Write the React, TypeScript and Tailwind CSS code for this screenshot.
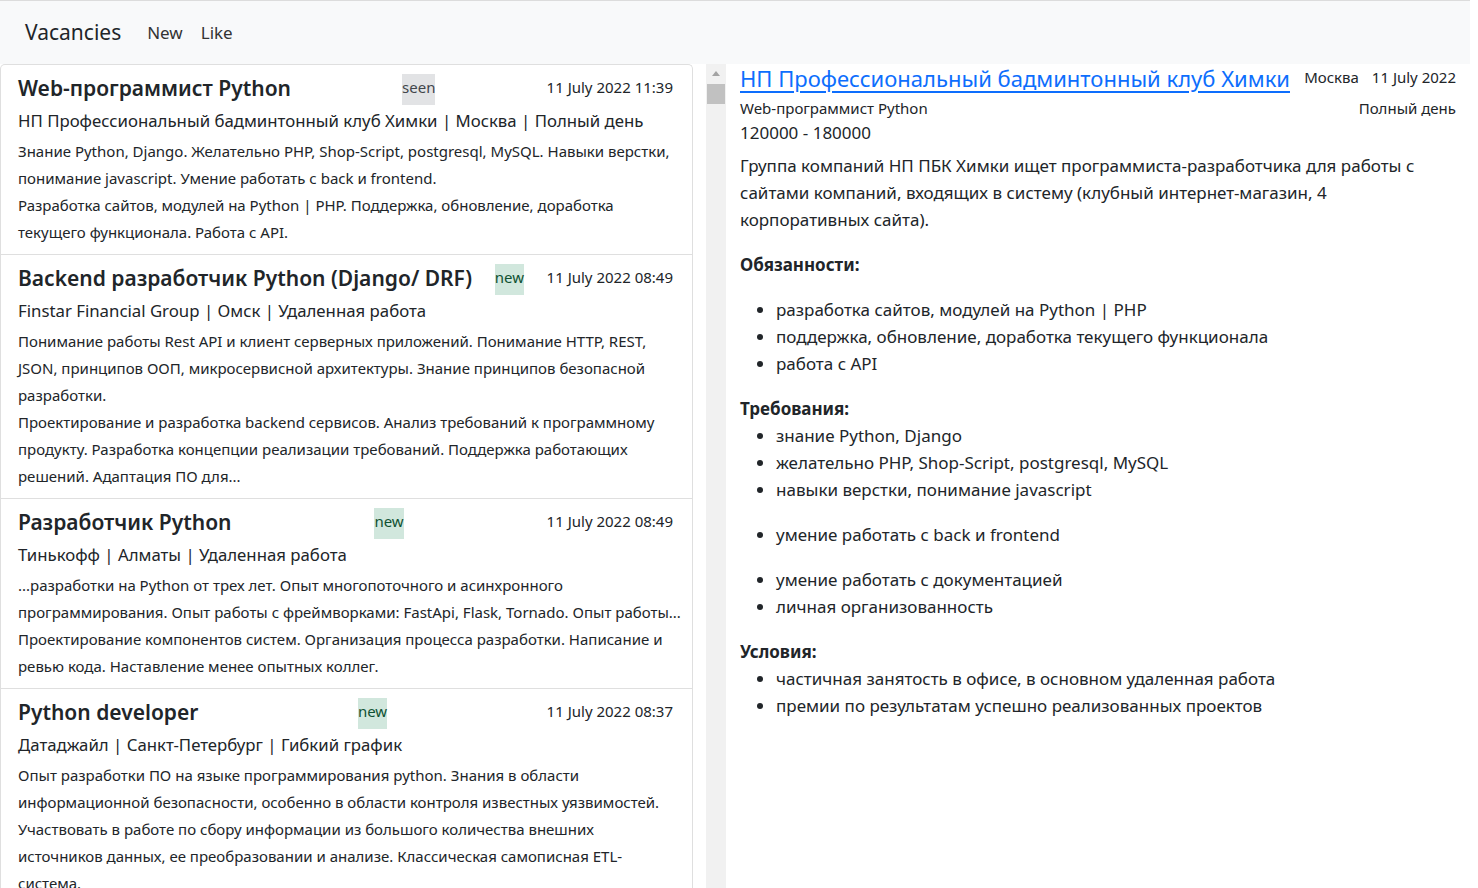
import React from "react";

type Vacancy = {
  id: number;
  title: string;
  badge: "seen" | "new";
  date: string;
  sub: string;
  lines: string[];
};

const vacancies: Vacancy[] = [
  {
    id: 1,
    title: "Web-программист Python",
    badge: "seen",
    date: "11 July 2022 11:39",
    sub: "НП Профессиональный бадминтонный клуб Химки | Москва | Полный день",
    lines: [
      "Знание Python, Django. Желательно PHP, Shop-Script, postgresql, MySQL. Навыки верстки,",
      "понимание javascript. Умение работать с back и frontend.",
      "Разработка сайтов, модулей на Python | PHP. Поддержка, обновление, доработка",
      "текущего функционала. Работа с API.",
    ],
  },
  {
    id: 2,
    title: "Backend разработчик Python (Django/ DRF)",
    badge: "new",
    date: "11 July 2022 08:49",
    sub: "Finstar Financial Group | Омск | Удаленная работа",
    lines: [
      "Понимание работы Rest API и клиент серверных приложений. Понимание HTTP, REST,",
      "JSON, принципов ООП, микросервисной архитектуры. Знание принципов безопасной",
      "разработки.",
      "Проектирование и разработка backend сервисов. Анализ требований к программному",
      "продукту. Разработка концепции реализации требований. Поддержка работающих",
      "решений. Адаптация ПО для...",
    ],
  },
  {
    id: 3,
    title: "Разработчик Python",
    badge: "new",
    date: "11 July 2022 08:49",
    sub: "Тинькофф | Алматы | Удаленная работа",
    lines: [
      "...разработки на Python от трех лет. Опыт многопоточного и асинхронного",
      "программирования. Опыт работы с фреймворками: FastApi, Flask, Tornado. Опыт работы...",
      "Проектирование компонентов систем. Организация процесса разработки. Написание и",
      "ревью кода. Наставление менее опытных коллег.",
    ],
  },
  {
    id: 4,
    title: "Python developer",
    badge: "new",
    date: "11 July 2022 08:37",
    sub: "Датаджайл | Санкт-Петербург | Гибкий график",
    lines: [
      "Опыт разработки ПО на языке программирования python. Знания в области",
      "информационной безопасности, особенно в области контроля известных уязвимостей.",
      "Участвовать в работе по сбору информации из большого количества внешних",
      "источников данных, ее преобразовании и анализе. Классическая самописная ETL-",
      "система.",
    ],
  },
];

const font = { fontFamily: '"Noto Sans", "Open Sans", sans-serif' };

const VacancyItem = ({ v }: { v: Vacancy }) => (
  <div className="border-b border-[#dfdfdf] pt-2 pr-[19px] pb-2 pl-[17px]">
    <div className="flex h-[30px] items-start justify-between">
      <div className="text-[21px] leading-[30px] font-semibold text-[#212529] whitespace-nowrap">{v.title}</div>
      <span
        className={
          v.badge === "seen"
            ? "mt-[1px] h-[31px] bg-[#e2e3e5] px-0 text-[15px] leading-[26px] text-[#41464b]"
            : "mt-[1px] h-[31px] bg-[#d1e7dd] px-0 text-[15px] leading-[26px] text-[#0f5132]"
        }
      >
        {v.badge}
      </span>
      <div className="text-[15px] leading-[28px] text-[#212529] whitespace-nowrap">{v.date}</div>
    </div>
    <div className="mt-1 text-[16.8px] leading-[27px] text-[#212529] whitespace-nowrap">{v.sub}</div>
    <div className="mt-1 text-[15px] leading-[27px] text-[#212529]">
      {v.lines.map((l, i) => (
        <div key={i} className="whitespace-nowrap">
          {l}
        </div>
      ))}
    </div>
  </div>
);

const Bullets = ({ items }: { items: string[] }) => (
  <ul className="list-disc pl-9 text-[17px] leading-[27px]">
    {items.map((t) => (
      <li key={t}>{t}</li>
    ))}
  </ul>
);

export default function App() {
  return (
    <div className="h-[888px] overflow-hidden bg-white text-[#212529]" style={font}>
      <nav className="flex h-[64px] w-[1470px] items-center border-t border-[#dcdcdc] bg-[#f8f9fa] pl-[25px]">
        <span className="text-[21px] text-[#212529]">Vacancies</span>
        <span className="ml-[26px] text-[17px] text-[#333]">New</span>
        <span className="ml-[18px] text-[17px] text-[#333]">Like</span>
      </nav>
      <div className="flex">
        {/* list column */}
        <div className="flex h-[824px] w-[726px] overflow-hidden">
          <div className="w-[693px] shrink-0 rounded-t-[5px] border-t border-r border-l border-[#dfdfdf]">
            {vacancies.map((v) => (
              <VacancyItem key={v.id} v={v} />
            ))}
          </div>
          <div className="ml-[13px] flex w-[20px] shrink-0 flex-col items-center bg-[#f1f1f1]">
            <div className="mt-[7px] h-0 w-0 border-r-[4px] border-b-[5px] border-l-[4px] border-r-transparent border-b-[#a3a3a3] border-l-transparent" />
            <div className="mt-[8px] h-[20px] w-[18px] bg-[#c1c1c1]" />
          </div>
        </div>
        {/* detail column */}
        <div className="ml-[14px] w-[716px]">
          <div className="flex items-start">
            <a href="#" className="flex-1 text-[22px] leading-[29px] text-[#0d6efd] underline underline-offset-[4px] whitespace-nowrap">
              НП Профессиональный бадминтонный клуб Химки
            </a>
            <span className="mt-[2px] text-[15px] leading-[22px]">Москва</span>
            <span className="mt-[2px] ml-[13px] text-[15px] leading-[22px]">11 July 2022</span>
          </div>
          <div className="mt-1 flex justify-between text-[15px] leading-[22px]">
            <span>Web-программист Python</span>
            <span>Полный день</span>
          </div>
          <div className="text-[17px] leading-[27px]">120000 - 180000</div>
          <div className="mt-[6px] text-[17px] leading-[27px]">
            Группа компаний НП ПБК Химки ищет программиста-разработчика для работы с<br />
            сайтами компаний, входящих в систему (клубный интернет-магазин, 4<br />
            корпоративных сайта).
          </div>
          <div className="mt-[18px] text-[17px] leading-[27px] font-bold">Обязанности:</div>
          <div className="mt-[18px]">
            <Bullets
              items={[
                "разработка сайтов, модулей на Python | PHP",
                "поддержка, обновление, доработка текущего функционала",
                "работа с API",
              ]}
            />
          </div>
          <div className="mt-[18px] text-[17px] leading-[27px] font-bold">Требования:</div>
          <Bullets items={["знание Python, Django", "желательно PHP, Shop-Script, postgresql, MySQL", "навыки верстки, понимание javascript"]} />
          <div className="mt-[18px]">
            <Bullets items={["умение работать с back и frontend"]} />
          </div>
          <div className="mt-[18px]">
            <Bullets items={["умение работать с документацией", "личная организованность"]} />
          </div>
          <div className="mt-[18px] text-[17px] leading-[27px] font-bold">Условия:</div>
          <Bullets
            items={[
              "частичная занятость в офисе, в основном удаленная работа",
              "премии по результатам успешно реализованных проектов",
            ]}
          />
        </div>
      </div>
    </div>
  );
}
